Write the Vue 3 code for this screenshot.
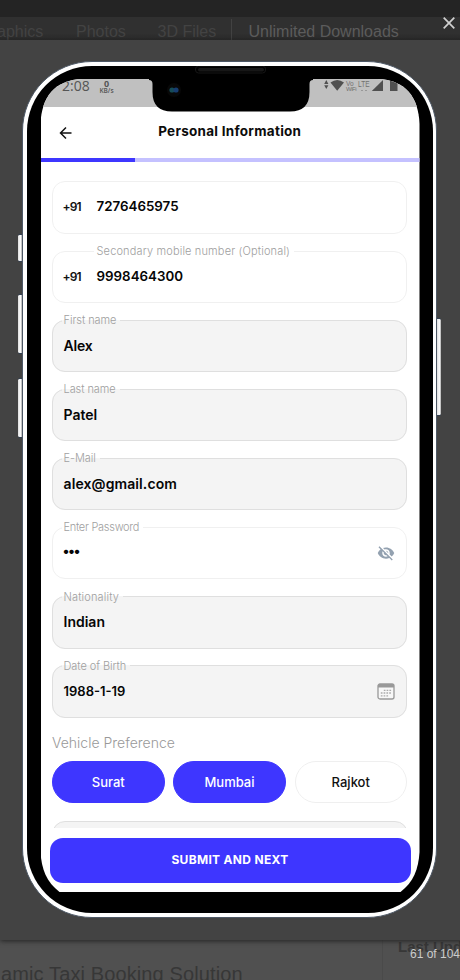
<script setup>
const fields = [
  { value: '7276465975', prefix: '+91', kind: 'phone-number', cls: 'first' },
  { label: 'Secondary mobile number (Optional)', value: '9998464300', prefix: '+91', kind: 'phone-number', cls: 'second' },
  { label: 'First name', value: 'Alex', filled: true, cls: 'given' },
  { label: 'Last name', value: 'Patel', filled: true, cls: 'family' },
  { label: 'E-Mail', value: 'alex@gmail.com', filled: true, cls: 'mail' },
  { label: 'Enter Password', value: '•••', icon: 'eye', cls: 'password' },
  { label: 'Nationality', value: 'Indian', filled: true, cls: 'nation' },
  { label: 'Date of Birth', value: '1988-1-19', filled: true, icon: 'calendar', cls: 'birth' },
]
const cities = [
  { name: 'Surat', on: true },
  { name: 'Mumbai', on: true },
  { name: 'Rajkot', on: false },
]
</script>

<template>
  <div class="page">
    <div class="topbar"></div>
    <nav class="nav">
      <span class="n1">aphics</span><span class="n2">Photos</span><span class="n3">3D Files</span><span class="n4">Unlimited Downloads</span>
    </nav>
    <main class="viewer">
      <div class="phone">
        <i class="key k1"></i><i class="key k2"></i><i class="key k3"></i><i class="key k4"></i>
        <div class="bezel">
          <div class="screen">
            <div class="status">
              <span class="time">2:08</span>
              <span class="rate"><b>0</b><small>KB/s</small></span>
              <svg class="signals" width="80" height="18" viewBox="0 0 80 18">
                <g fill="#505050">
                  <path d="M0.2 5 2.3 1 4.4 5ZM0.2 6.2H4.4L2.3 10Z" />
                  <path d="M6.500 3.600Q13.200-1.400 20 3.600L13.200 11.800Z" />
                  <path d="M59 1V12H47.800Z" />
                  <path d="M67 1H73.500V12H66V2Z" />
                </g>
                <g fill="#707070" font-family="Liberation Sans, sans-serif">
                  <text x="22" y="7.300" font-size="6.500">Vo</text>
                  <text x="22" y="12" font-size="6" textLength="10.500">WiFi</text>
                  <text x="34" y="8.300" font-size="8.500" textLength="11.500" lengthAdjust="spacingAndGlyphs">LTE</text>
                  <path d="M37 11h2v1h-2zM41 11h2v1h-2z" opacity=".5" />
                </g>
              </svg>
            </div>
            <header class="head">
              <svg class="back" width="14" height="14" viewBox="0 0 14 14" fill="none" stroke="#111" stroke-width="1.500">
                <path d="M12.500 7H1.500M7 1.500 1.500 7 7 12.500" />
              </svg>
              <h1>Personal Information</h1>
            </header>
            <div class="progress"><i></i></div>
            <section class="form">
              <fieldset v-for="f in fields" :key="f.cls" class="field" :class="[f.cls, f.kind, { filled: f.filled }]">
                <legend v-if="f.label"><span>{{ f.label }}</span></legend>
                <div class="row">
                  <span v-if="f.prefix" class="prefix">{{ f.prefix }}</span>
                  <span class="value">{{ f.value }}</span>
                  <svg v-if="f.icon === 'eye'" class="icon" width="18" height="18" viewBox="0 0 24 24" fill="#93a1b0">
                    <path d="M12 7c2.760 0 5 2.240 5 5 0 .65-.13 1.260-.36 1.830l2.920 2.920c1.510-1.260 2.700-2.890 3.430-4.750-1.730-4.390-6-7.500-11-7.500-1.400 0-2.740.25-3.980.7l2.160 2.160C10.740 7.130 11.350 7 12 7zM2 4.270l2.280 2.280.46.46C3.080 8.300 1.780 10.020 1 12c1.730 4.390 6 7.500 11 7.500 1.550 0 3.030-.3 4.380-.84l.42.42L19.730 22 21 20.730 3.270 3 2 4.270zM7.530 9.800l1.550 1.550c-.05.21-.08.43-.08.65 0 1.660 1.340 3 3 3 .22 0 .44-.03.65-.08l1.550 1.550c-.67.33-1.410.53-2.200.53-2.760 0-5-2.240-5-5 0-.79.2-1.530.53-2.200zm4.310-.78 3.150 3.150.02-.16c0-1.660-1.340-3-3-3l-.17.01z" />
                  </svg>
                  <svg v-if="f.icon === 'calendar'" class="icon" width="18" height="17" viewBox="0 0 18 17">
                    <rect x="1" y="1" width="16" height="15" rx="2" fill="#f7f7f7" stroke="#999" stroke-width="1.300" />
                    <path d="M1 4.400V2.500Q1 1 2.500 1H15.500Q17 1 17 2.500V4.400Z" fill="#999" />
                    <path d="M6.800 7.300H15M3.800 10H15M3.800 12.900H12" stroke="#aaa" stroke-width="1.300" stroke-dasharray="1.700 1.100" />
                  </svg>
                </div>
              </fieldset>
              <h2>Vehicle Preference</h2>
              <div class="chips">
                <button v-for="c in cities" :key="c.name" :class="{ on: c.on }">{{ c.name }}</button>
              </div>
              <div class="peek"><div></div></div>
            </section>
            <footer><button class="submit">SUBMIT AND NEXT</button></footer>
          </div>
        </div>
        <svg class="notch" width="164" height="46" viewBox="-2 0 164 46">
          <path d="M-2 14Q1.500 14 1.500 18V26Q1.500 45.500 21 45.500H139Q158.500 45.500 158.500 26V18Q158.500 14 162 14V0H-2Z" />
          <rect x="44.500" y="0" width="70" height="7" rx="3" fill="#000" stroke="#161616" />
          <rect x="47" y="2" width="66" height="3.500" rx="1.700" fill="#171717" />
          <circle cx="23" cy="24" r="7" fill="#080808" />
          <circle cx="21" cy="24" r="2.600" fill="#164c57" />
          <circle cx="25" cy="24" r="2.600" fill="#173d70" />
        </svg>
      </div>
    </main>
    <div class="below">
      <div class="product">amic Taxi Booking Solution</div>
      <div class="updated">Last Upda</div>
    </div>
    <svg class="close" width="12" height="12" viewBox="0 0 12 12" stroke="#d0d0d0" stroke-width="1.700"><path d="M.7.7 11.300 11.300M11.300.7.7 11.300" /></svg>
    <div class="counter">61 of 104</div>
  </div>
</template>

<style>
body { margin: 0; overflow: hidden; background: #505050; }
</style>

<style scoped>
* { box-sizing: border-box; }
.page { position: relative; width: 460px; height: 980px; overflow: hidden; display: grid; grid-template-rows: 17px 23px 900px 40px; background: #505050; font-family: "Liberation Sans", Arial, sans-serif; }
.topbar { background: #242424; }
.nav { background: linear-gradient(#303030 17px, #292929); display: grid; grid-template-columns: 76px 81.500px 73px 1fr; line-height: 29px; font-size: 16px; color: #434343; white-space: nowrap; overflow: hidden; }
.n1 { margin-left: -3px; }
.n4 { border-left: 1px solid #424242; padding-left: 17px; color: #5c5c5c; margin-top: 2px; line-height: 25px; }
.viewer { z-index: 1; padding: 21px 0 0 22px; background: #434343; box-shadow: 0 1px 5px #222; }
.phone { position: relative; width: 415px; height: 857px; border-radius: 70px; background: #fff; border: 1px solid #4d5866; padding: 4px 3px 4px 4px; }
.key { position: absolute; width: 4px; left: -5px; background: linear-gradient(90deg, #ddd, #fff 60%, #aaa); border: solid #344154; border-width: 1px 0; border-radius: 2px 0 0 2px; }
.k1 { top: 172px; height: 28px; }
.k2 { top: 232px; height: 60px; }
.k3 { top: 316px; height: 60px; }
.k4 { left: 414px; top: 256px; height: 98px; border-radius: 0 2px 2px 0; }
.bezel { width: 406px; height: 847px; border-radius: 65px; background: #000; padding: 13px 0 0 13.500px; }
.screen { width: 379px; height: 813px; background: #fff; display: grid; grid-template-rows: 28px 51px 4px 666px 64px; clip-path: path("M0 45C1 18 14 1 42 0H337C365 1 378 18 379 45V773C378 790 373 803 360 813H19C6 803 1 790 0 773Z"); font-family: Inter, sans-serif; }
.status { background: #c0c0c0; display: flex; color: #555; }
.time { margin: -2px 0 0 21.500px; width: 37px; font: 14px/18px "Open Sans", sans-serif; }
.rate { width: 15px; display: flex; flex-direction: column; align-items: center; }
.rate b { font: bold 9px/9px "Open Sans", sans-serif; }
.rate small { font: 600 6.500px/5px "Open Sans", sans-serif; }
.signals { margin-left: 210px; flex: none; }
.head { display: grid; grid-template-columns: 14px 1fr 33px; align-items: center; padding-left: 18.500px; }
.back { margin-top: 1px; }
.head h1 { margin: -3px 0 0; font-size: 13.500px; line-height: 18px; font-weight: 700; letter-spacing: .27px; text-align: center; color: #0c0c0c; }
.progress { background: #c4c1ff; }
.progress i { display: block; height: 4px; width: 94.500px; background: #3e36ff; }
.form { padding: 19px 12px 0 11.500px; display: flex; flex-direction: column; overflow: hidden; }
.field { flex: none; min-width: 0; width: 355px; height: 59px; margin: 0 0 10.100px; padding: 0 13px 0 8.500px; border: 1px solid #f0f0f0; border-radius: 13px; }
.field.first { height: 53px; }
.field.filled { background: #f4f4f4; border-color: #dfdfdf; }
legend { padding: 0 4px 0 2px; height: 14px; font-size: 11px; line-height: 14px; letter-spacing: -.07px; color: #a0a0a0; font-weight: 300; white-space: nowrap; }
.second legend { margin-left: 32px; padding-left: 3px; letter-spacing: .15px; }
.password legend { letter-spacing: -.28px; }
.nation legend { letter-spacing: .14px; }
.row { height: 50px; margin-top: -7px; padding-left: 2px; display: flex; align-items: center; }
.first .row { margin-top: -1px; }
.value { flex: 1; font-size: 14px; font-weight: 600; color: #060606; }
.given .value { letter-spacing: -.2px; }
.mail .value { letter-spacing: .1px; }
.phone-number .value { font-size: 13.350px; }
.birth .value { font-size: 13px; }
.password .value { letter-spacing: -1.500px; margin: -3px 0 0 -1px; }
.prefix { width: 34px; margin-left: -1px; font-size: 12px; font-weight: 600; color: #111; letter-spacing: -.9px; }
.icon { flex: none; margin: 2px -1.500px 0 0; }
h2 { margin: 6px 0 0; height: 18px; font-size: 14px; line-height: 18px; font-weight: 300; color: #999; }
.chips { margin-top: 9px; display: grid; grid-template-columns: repeat(3, 112.500px); gap: 8.750px; height: 42px; flex: none; }
.chips button { border: 1px solid #efefef; border-radius: 21px; background: #fff; font: 500 13px Inter, sans-serif; color: #111; padding: 0; }
.chips button.on { background: #3e36ff; border-color: #3e36ff; color: #fff; }
.peek { height: 7px; margin-top: 18px; overflow: hidden; flex: none; }
.peek div { height: 52px; border: 1px solid #dfdfdf; background: #f4f4f4; border-radius: 13px; }
footer { padding: 10px 9px 0; }
.submit { display: block; width: 361px; height: 45px; border: 0; border-radius: 13px; background: #3e36ff; color: #fff; font: 700 12px Inter, sans-serif; letter-spacing: .32px; padding: 0 0 2px; }
.notch { position: absolute; left: 126px; top: 4px; }
.below { display: grid; grid-template-columns: 382px 1fr; color: #373737; white-space: nowrap; }
.product { padding: 23px 0 0 1px; font-size: 20px; line-height: 23px; letter-spacing: .12px; }
.updated { border-left: 1px solid #4a4a4a; padding-left: 15px; font: bold 15px/14px "Liberation Sans", sans-serif; }
.close { position: absolute; left: 443px; top: 17px; z-index: 2; }
.counter { position: absolute; left: 410px; top: 947px; z-index: 2; font-size: 12px; line-height: 14px; color: #ccc; white-space: nowrap; }
</style>
